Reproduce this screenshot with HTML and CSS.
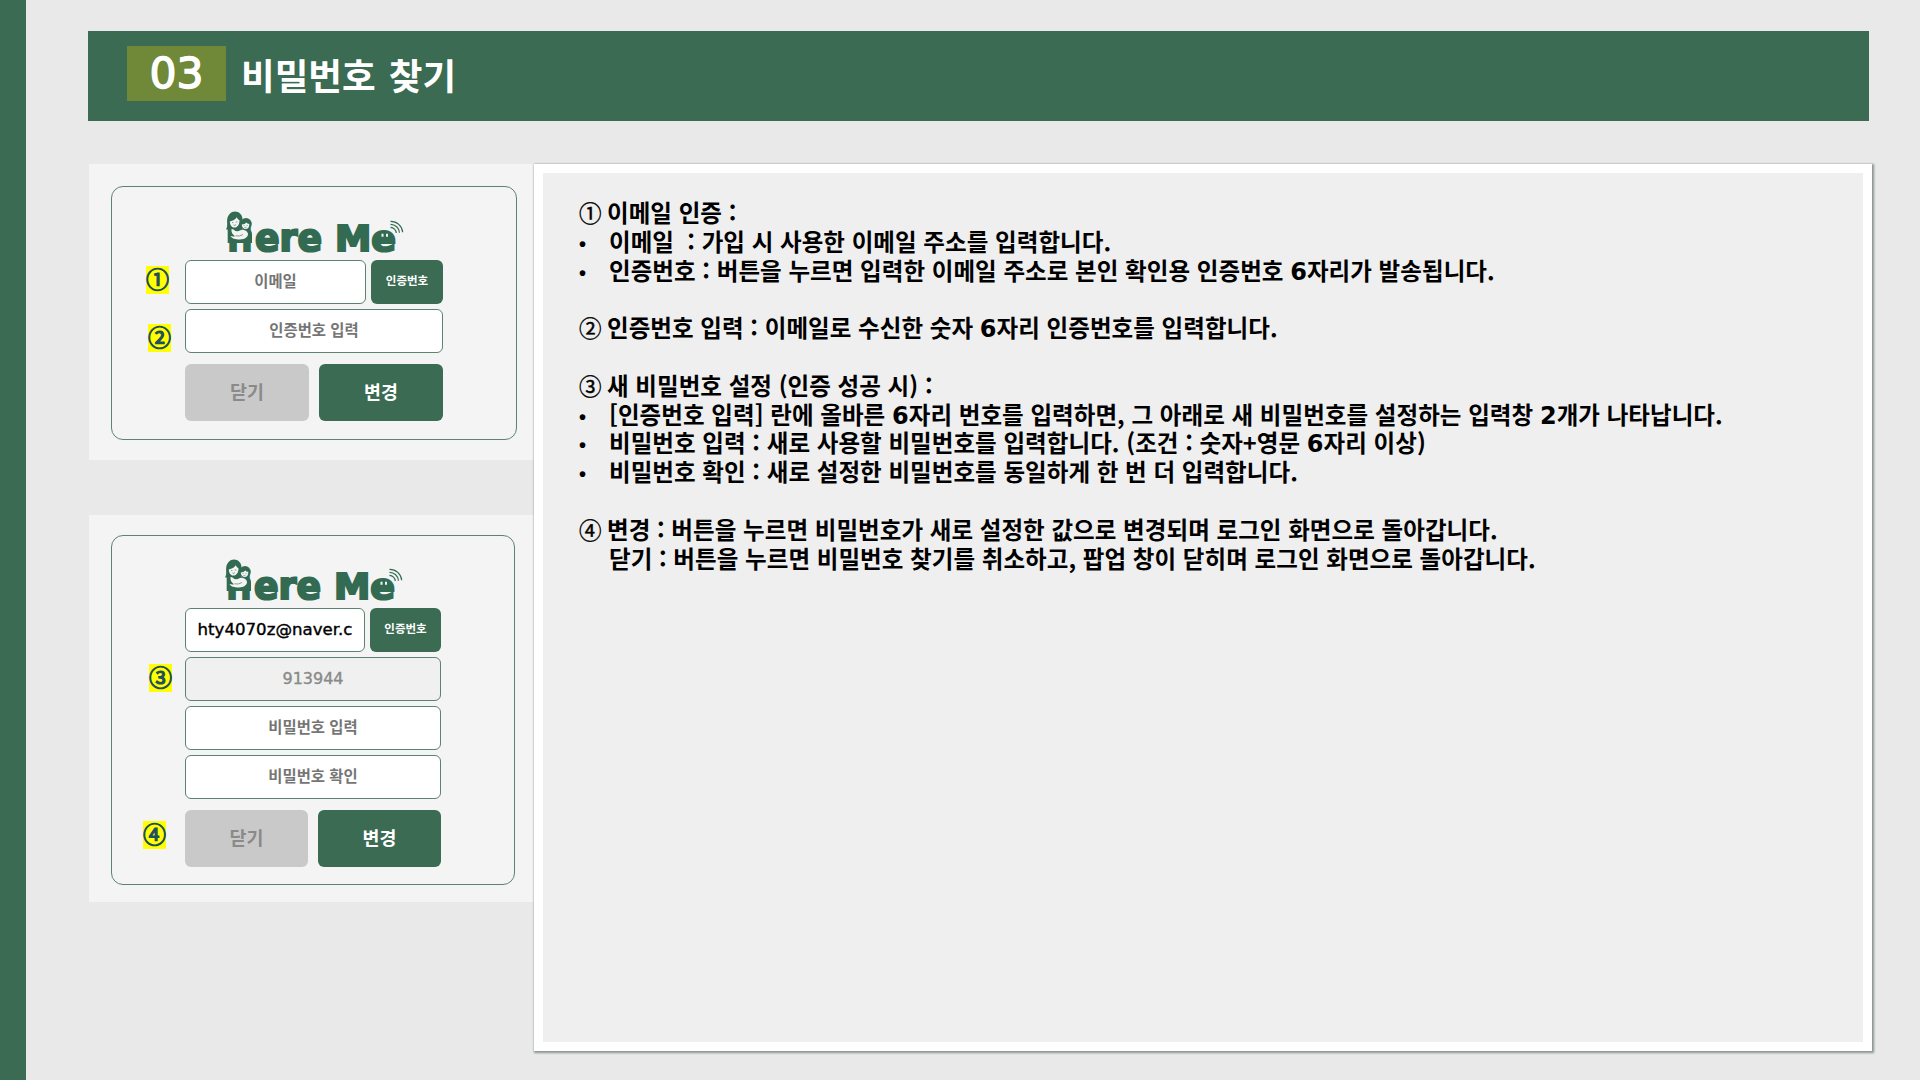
FILE: index.html
```html
<!DOCTYPE html>
<html lang="ko">
	<head>
		<meta charset="UTF-8" />
		<meta
			name="viewport"
			content="width=device-width, initial-scale=1.0"
		/>
		<title>Here Me - 비밀번호 찾기</title>
		<link rel="stylesheet" href="styles.css">
	</head>
	<body>
		<div class="slide">
			<header class="title-bar">
				<span class="number">03</span>
				<h1>비밀번호 찾기</h1>
			</header>

			<main class="content">
				<div class="screens">
					<section class="screen">
						<form class="popup">
							<svg class="logo" viewBox="0 0 184 44">
								<g class="logo-text">
									<text x="4.5" y="41" textLength="25" lengthAdjust="spacingAndGlyphs">H</text>
									<text class="low" x="32" y="41" textLength="67" lengthAdjust="spacingAndGlyphs">ere</text>
									<text x="112" y="41" textLength="61" lengthAdjust="spacingAndGlyphs">Me</text>
								</g>
								<!-- mother and baby -->
								<path class="ink" d="M4.7 19h19c3.500 0 5.300 2 5.300 5v9H4.700z" />
								<path class="ink" d="M3 19.500c2-3 .8-6 1.200-10C4.800 4.600 8 1.400 12 1.400c4.200 0 7.300 3.200 7.500 7.600.1 3-.5 6 .2 10.500z" />
								<circle class="ink" cx="23" cy="13.800" r="5.800" />
								<path class="skin" d="M6.800 11.500c3.200-.6 5.500-2 7-4.200.6 1.500 1.500 2.400 2.700 3 0 4.300-2 7.300-5 7.300-2.800 0-4.500-2.500-4.700-6.100z" />
								<path class="skin" d="M18.800 14.500c2-.1 3.500-.8 4.500-2 .7.9 1.700 1.400 3 1.600.2 3-1.400 5-3.600 5s-3.800-1.800-3.900-4.600z" />
								<path class="skin" d="M8.500 19c2.500 0 3 2.500 6 2.200 2.500-.2 3-2 5.500-1.400 2.500.5 4.500 1.500 5 4 .3 3-3 5.700-8 5.700-4.500 0-8.500-1-9.500-3.500 1.500.5 3.500.5 4.500.2-2.500-1.700-4-4-3.500-7.200z" />
								<path class="line" d="M9 12.600h1.400M12.800 12h1.500M10.500 15q1.500 1 2.500-.5M20.600 15.600h1M23.600 15.400h1M21.500 17.400q1 .5 2-.2M12.500 25.800q4 1 7.500-1.300" />
								<!-- smiling last letter -->
								<path class="ink" d="M156.500 22.500h9v6.500h-9z" />
								<path class="eyes" d="M159.500 23.800v3M164 23.800v3" />
								<path class="waves" d="M167.500 11.300a12 12 0 0 1 12.200 11M167.500 14.300a9 9 0 0 1 9 8.500M167.500 17.300a6 6 0 0 1 5.800 5.800" />
							</svg>
							<div class="row">
								<div class="field email">이메일</div>
								<div class="btn send">인증번호</div>
							</div>
							<div class="field">인증번호 입력</div>
							<div class="row actions">
								<div class="btn close">닫기</div>
								<div class="btn">변경</div>
							</div>
						</form>
						<span class="mark mark-1">①</span>
						<span class="mark mark-2">②</span>
					</section>

					<section class="screen second">
						<form class="popup">
							<svg class="logo" viewBox="0 0 184 44">
								<g class="logo-text">
									<text x="4.5" y="41" textLength="25" lengthAdjust="spacingAndGlyphs">H</text>
									<text class="low" x="32" y="41" textLength="67" lengthAdjust="spacingAndGlyphs">ere</text>
									<text x="112" y="41" textLength="61" lengthAdjust="spacingAndGlyphs">Me</text>
								</g>
								<!-- mother and baby -->
								<path class="ink" d="M4.7 19h19c3.500 0 5.300 2 5.300 5v9H4.700z" />
								<path class="ink" d="M3 19.500c2-3 .8-6 1.200-10C4.800 4.600 8 1.400 12 1.400c4.200 0 7.300 3.200 7.500 7.600.1 3-.5 6 .2 10.500z" />
								<circle class="ink" cx="23" cy="13.800" r="5.800" />
								<path class="skin" d="M6.800 11.500c3.200-.6 5.500-2 7-4.200.6 1.500 1.500 2.400 2.700 3 0 4.300-2 7.300-5 7.300-2.800 0-4.500-2.500-4.700-6.100z" />
								<path class="skin" d="M18.800 14.500c2-.1 3.500-.8 4.500-2 .7.9 1.700 1.400 3 1.600.2 3-1.400 5-3.600 5s-3.800-1.800-3.900-4.600z" />
								<path class="skin" d="M8.500 19c2.500 0 3 2.500 6 2.200 2.500-.2 3-2 5.500-1.400 2.500.5 4.500 1.500 5 4 .3 3-3 5.700-8 5.700-4.500 0-8.500-1-9.500-3.500 1.500.5 3.500.5 4.500.2-2.500-1.700-4-4-3.500-7.200z" />
								<path class="line" d="M9 12.600h1.400M12.800 12h1.500M10.500 15q1.500 1 2.500-.5M20.600 15.600h1M23.600 15.400h1M21.500 17.400q1 .5 2-.2M12.500 25.800q4 1 7.500-1.300" />
								<!-- smiling last letter -->
								<path class="ink" d="M156.500 22.500h9v6.500h-9z" />
								<path class="eyes" d="M159.500 23.800v3M164 23.800v3" />
								<path class="waves" d="M167.500 11.300a12 12 0 0 1 12.200 11M167.500 14.300a9 9 0 0 1 9 8.500M167.500 17.300a6 6 0 0 1 5.800 5.800" />
							</svg>
							<div class="row">
								<div class="field email filled">hty4070z@naver.c</div>
								<div class="btn send">인증번호</div>
							</div>
							<div class="field disabled">913944</div>
							<div class="field">비밀번호 입력</div>
							<div class="field">비밀번호 확인</div>
							<div class="row actions">
								<div class="btn close">닫기</div>
								<div class="btn">변경</div>
							</div>
						</form>
						<span class="mark mark-3">③</span>
						<span class="mark mark-4">④</span>
					</section>
				</div>

				<article class="notes">
					<p><i>①</i>이메일 인증 :</p>
					<ul>
						<li>이메일&nbsp; : 가입 시 사용한 이메일 주소를 입력합니다.</li>
						<li>인증번호 : 버튼을 누르면 입력한 이메일 주소로 본인 확인용 인증번호 <b>6</b>자리가 발송됩니다.</li>
					</ul>
					<p><i>②</i>인증번호 입력 : 이메일로 수신한 숫자 <b>6</b>자리 인증번호를 입력합니다.</p>
					<p><i>③</i>새 비밀번호 설정 (인증 성공 시) :</p>
					<ul>
						<li>[인증번호 입력] 란에 올바른 <b>6</b>자리 번호를 입력하면, 그 아래로 새 비밀번호를 설정하는 입력창 <b>2</b>개가 나타납니다.</li>
						<li>비밀번호 입력 : 새로 사용할 비밀번호를 입력합니다. (조건 : 숫자+영문 <b>6</b>자리 이상)</li>
						<li>비밀번호 확인 : 새로 설정한 비밀번호를 동일하게 한 번 더 입력합니다.</li>
					</ul>
					<p><i>④</i>변경 : 버튼을 누르면 비밀번호가 새로 설정한 값으로 변경되며 로그인 화면으로 돌아갑니다.</p>
					<p class="indent">닫기 : 버튼을 누르면 비밀번호 찾기를 취소하고, 팝업 창이 닫히며 로그인 화면으로 돌아갑니다.</p>
				</article>
			</main>
		</div>
	</body>
</html>
```
FILE: styles.css
```css
* {
	margin: 0;
	padding: 0;
	box-sizing: border-box;
}

body {
	font-family: 'Noto Sans CJK KR', sans-serif;
	background: #e9e9e9;
	color: #000;
}

.slide {
	height: 1080px;
	border-left: 26px solid #3b6b52;
	padding: 31px 47px 0 62px;
	overflow: hidden;
}

.title-bar {
	display: flex;
	align-items: center;
	width: 1781px;
	height: 90px;
	padding: 0 39px 5px;
	background: #3b6b52;
	color: #fff;
}

.number {
	width: 99px;
	height: 55px;
	background: #6f8938;
	font-family: 'DejaVu Sans', sans-serif;
	font-size: 42.5px;
	line-height: 56px;
	text-align: center;
	-webkit-text-stroke: 1.4px #fff;
}

h1 {
	margin-left: 15px;
	font-size: 36.6px;
	line-height: 55px;
	padding-top: 1px;
	word-spacing: 3px;
}

.content {
	display: flex;
	margin-top: 43px;
}

.screens {
	width: 446px;
	padding-left: 1px;
}

.screen {
	position: relative;
	height: 296px;
	padding: 22px 0 0 22px;
	background: #f4f4f4;
}

.screen.second {
	height: 387px;
	margin-top: 55px;
	padding-top: 20px;
}

.popup {
	display: flex;
	flex-direction: column;
	gap: 5px;
	width: 406px;
	height: 254px;
	padding: 23px 73px 0;
	border: 1px solid #5b8370;
	border-radius: 12px;
}

.second .popup {
	width: 404px;
	height: 350px;
	padding: 22px 73px 0;
}

.logo {
	display: block;
	flex: none;
	width: 184px;
	height: 44px;
	margin: 0 0 1px 38px;
	overflow: visible;
}

.second .logo {
	margin-left: 37px;
}

.logo-text {
	font-family: 'DejaVu Sans', sans-serif;
	font-size: 36px;
	font-weight: 700;
	fill: #336b52;
	stroke: #336b52;
	stroke-width: 2.2;
}

.logo-text .low {
	font-size: 38px;
}

.ink {
	fill: #336b52;
}

.skin {
	fill: #f4f4f4;
}

.line {
	fill: none;
	stroke: #336b52;
	stroke-width: 0.6;
}

.eyes {
	stroke: #f4f4f4;
	stroke-width: 2;
}

.waves {
	fill: none;
	stroke: #336b52;
	stroke-width: 1.2;
}

.row {
	display: flex;
	gap: 5px;
}

.field {
	flex: none;
	height: 44px;
	border: 1px solid #5b8370;
	border-radius: 6px;
	background: #fff;
	color: #757575;
	font-size: 15.4px;
	font-weight: 700;
	line-height: 39px;
	text-align: center;
}

.email {
	width: 181px;
}

.second .email {
	width: 180px;
}

.filled {
	color: #000;
	font-family: 'DejaVu Sans', sans-serif;
	font-size: 16.6px;
	font-weight: 400;
	line-height: 41px;
	-webkit-text-stroke: 0.4px #000;
}

.disabled {
	background: #f0f0f0;
	color: #8a8a8a;
	font-family: 'DejaVu Sans', sans-serif;
	font-size: 16px;
	font-weight: 400;
	line-height: 42px;
	-webkit-text-stroke: 0.4px #8a8a8a;
}

.btn {
	flex: 1;
	height: 57px;
	border-radius: 6px;
	background: #3b6b52;
	color: #fff;
	font-size: 18.4px;
	font-weight: 700;
	line-height: 54px;
	text-align: center;
}

.btn.send {
	height: 44px;
	font-size: 11.5px;
	line-height: 41px;
}

.actions {
	gap: 10px;
	margin-top: 6px;
}

.btn.close {
	background: #c9c9c9;
	color: #8a8a8a;
}

/* step numbers pinned over the screens */
.mark {
	position: absolute;
	width: 23px;
	height: 28px;
	background: #ff0;
	color: #1f4e5f;
	font-size: 23px;
	font-weight: 400;
	line-height: 25px;
	text-align: center;
	-webkit-text-stroke: 1.2px #1f4e5f;
}

.mark-1 {
	left: 57px;
	top: 102px;
}

.mark-2 {
	left: 59px;
	top: 160px;
}

.mark-3 {
	left: 60px;
	top: 149px;
}

.mark-4 {
	left: 54px;
	top: 306px;
}

.notes {
	width: 1338px;
	height: 887px;
	padding: 25px 36px;
	border: 9px solid #fff;
	background: #efefef;
	box-shadow: 1px 1px 2px 1px #8c9490;
	font-size: 23.5px;
	font-weight: 700;
	line-height: 28.8px;
	letter-spacing: 0.06px;
	white-space: nowrap;
	z-index: 1;
}

.notes b {
	font-family: 'DejaVu Sans', sans-serif;
	font-size: 24px;
	line-height: 1;
}

.notes i {
	display: inline-block;
	width: 28px;
	font-size: 22.5px;
	font-style: normal;
	font-weight: 400;
	-webkit-text-stroke: 0.4px #000;
}

.notes ul {
	list-style: none;
}

.notes li::before {
	content: '•';
	display: inline-block;
	width: 30px;
	font-family: 'Liberation Sans', sans-serif;
	font-size: 20px;
	line-height: 1;
}

.notes ul + p,
.notes p + p {
	margin-top: 28.8px;
}

.notes .indent {
	margin-top: 0 !important;
	padding-left: 30px;
}
```
